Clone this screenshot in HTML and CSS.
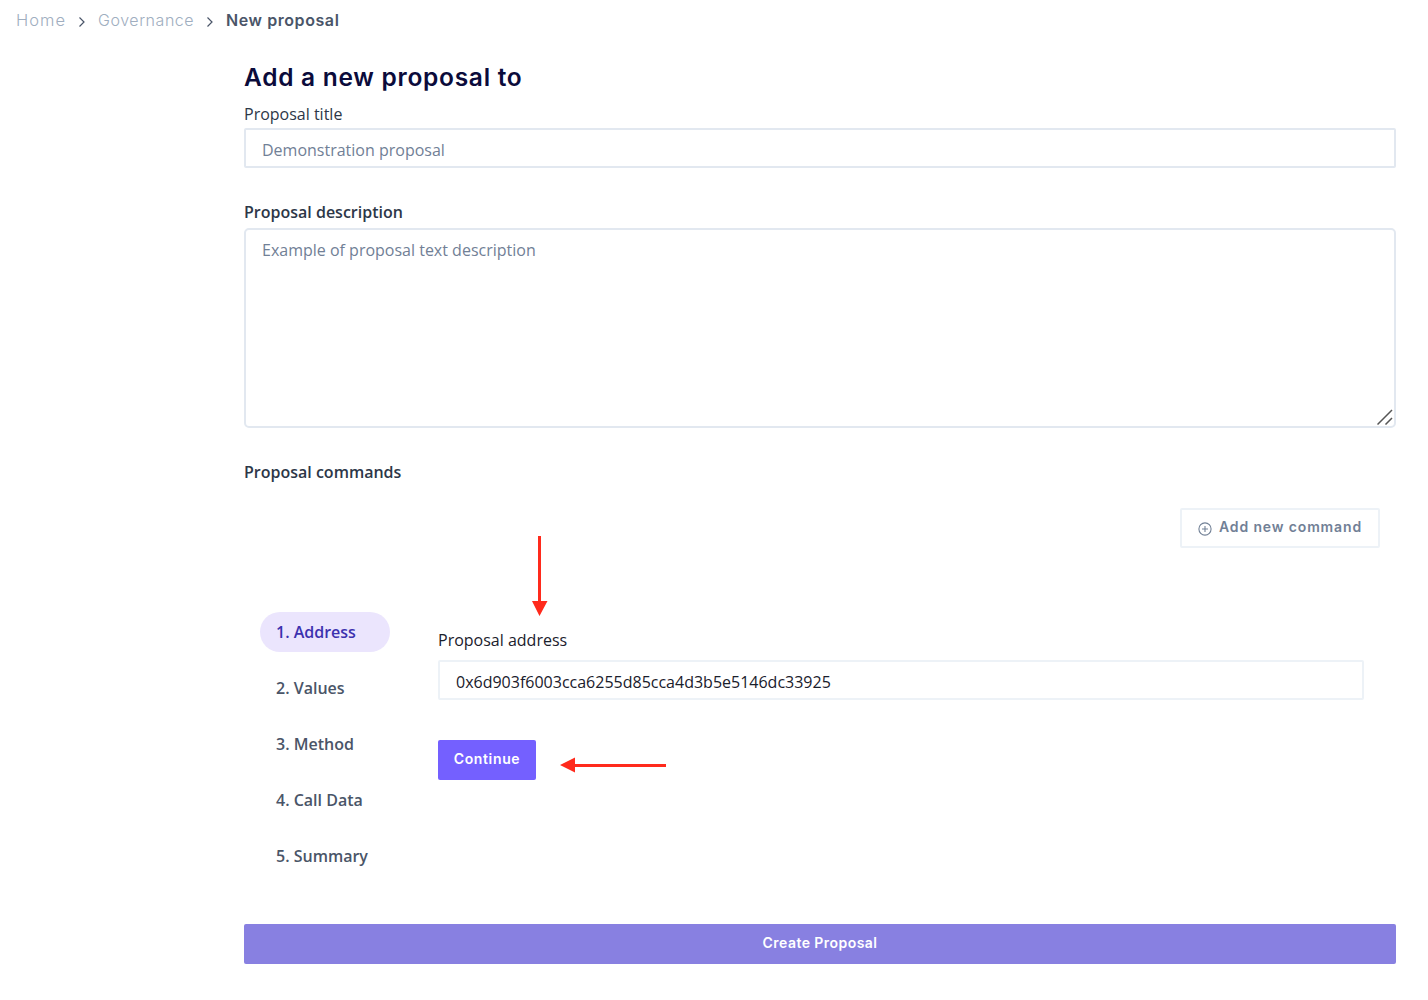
FILE: index.html
```html
<!DOCTYPE html>
<html lang="en">
<head>
<meta charset="utf-8">
<title>New proposal</title>
<link rel="stylesheet" href="styles.css">
</head>
<body>
<nav class="breadcrumb">
  <a class="crumb home">Home</a>
  <svg class="chevron" viewBox="0 0 8 12"><path d="M1.500 1.500L6 6l-4.500 4.500"/></svg>
  <a class="crumb governance">Governance</a>
  <svg class="chevron" viewBox="0 0 8 12"><path d="M1.500 1.500L6 6l-4.500 4.500"/></svg>
  <span class="current">New proposal</span>
</nav>
<main class="form">
  <h1 class="heading"><span>Add a new proposal to</span></h1>
  <label class="label plain" for="title"><span>Proposal title</span></label>
  <input class="field" id="title" placeholder="Demonstration proposal">
  <label class="label description-label" for="description"><span>Proposal description</span></label>
  <div class="area-wrap">
    <textarea class="area" id="description" placeholder="Example of proposal text description"></textarea>
    <svg class="grip" viewBox="0 0 16 16"><path d="M.5 15.500L15 1M8.500 15.500L15 9"/></svg>
  </div>
  <div class="label commands-label"><span>Proposal commands</span></div>
  <div class="toolbar">
    <button class="add">
      <svg class="plus" viewBox="0 0 14 14"><circle cx="7" cy="7" r="6.1"/><path d="M7 4v6M4 7h6"/></svg>
      <span class="add-text">Add new command</span>
    </button>
  </div>
  <section class="command">
    <ol class="steps">
      <li class="step active">1. Address</li>
      <li class="step">2. Values</li>
      <li class="step">3. Method</li>
      <li class="step">4. Call Data</li>
      <li class="step">5. Summary</li>
    </ol>
    <div class="panel">
      <label class="label address-label" for="address"><span>Proposal address</span></label>
      <input class="field light" id="address" value="0x6d903f6003cca6255d85cca4d3b5e5146dc33925">
      <button class="continue"><span>Continue</span></button>
      <svg class="arrow down" viewBox="0 0 16 80"><path d="M6 0h3v65h6.500L7.500 80 0 65h6z"/></svg>
      <svg class="arrow left" viewBox="0 0 106 16"><path d="M106 7v3H15V15.500L0 8 15 .5V7z"/></svg>
    </div>
  </section>
  <button class="create"><span>Create Proposal</span></button>
</main>
</body>
</html>
```
FILE: styles.css
```css
* { box-sizing: border-box; }
body { margin: 0; background: #fff; color: #2d3748; font: 16px/24px "Open Sans", sans-serif; }
input, textarea, button { margin: 0; font: inherit; }
.breadcrumb { display: flex; align-items: center; height: 40px; padding-left: 16px; font-family: Inter, sans-serif; }
.crumb { color: #a0aec0; font-weight: 300; white-space: nowrap; }
.home { width: 50px; font-size: 16.5px; letter-spacing: 1px; }
.governance { width: 96px; letter-spacing: .55px; }
.chevron { width: 8px; height: 12px; margin: 3px 12px 0; fill: none; stroke: #4a5568; stroke-width: 1.2; }
.current { color: #4a5568; font-weight: 600; letter-spacing: .58px; }
.form { display: flex; flex-direction: column; width: 1152px; margin-left: 244px; }
.heading { margin: 19px 0 1px; height: 36px; color: #0b0b3b; font: 600 24.5px/36px Inter, sans-serif; letter-spacing: .72px; }
.label { display: block; height: 24px; font-weight: 600; }
.plain { margin-top: 6px; font-weight: 400; }
.field { width: 100%; height: 40px; margin-top: 2px; padding: 4px 16px 0; background: #fff; border: 2px solid #e2e8f0; border-radius: 2px; color: #1a202c; outline: 0; }
.field::placeholder, .area::placeholder { color: #718096; opacity: 1; }
.description-label { margin-top: 32px; }
.area-wrap { position: relative; height: 200px; margin-top: 4px; }
.area { display: block; width: 100%; height: 200px; padding: 8px 16px; border: 2px solid #e2e8f0; border-radius: 5px; resize: none; outline: 0; }
.grip { position: absolute; right: 3px; bottom: 3px; width: 16px; height: 16px; fill: none; stroke: #555; stroke-width: 1.5; }
.commands-label { margin-top: 32px; }
.toolbar { display: flex; justify-content: flex-end; margin-top: 24px; padding-right: 16px; }
.add { display: flex; align-items: center; width: 200px; height: 40px; padding: 0 16px 2px; background: #fff; border: 2px solid #edf2f7; border-radius: 2px; color: #718096; font: 600 14px/20px Inter, sans-serif; }
.plus { width: 14px; height: 14px; margin: 4px 7px 0 0; fill: none; stroke: #718096; stroke-width: 1.1; }
.add-text { letter-spacing: .86px; white-space: nowrap; }
.command { display: flex; height: 264px; margin: 64px 32px 0 16px; }
.steps { display: flex; flex-direction: column; gap: 16px; width: 130px; margin: 0; padding: 0; list-style: none; }
.step { height: 40px; padding: 8px 16px; border-radius: 20px; color: #4a5568; font-weight: 600; }
.active { background: #ebe5fd; color: #3c31af; }
.panel { position: relative; flex: 1; margin-left: 48px; padding-top: 16px; }
.address-label { color: #1a202c; font-weight: 400; }
.light { display: block; margin-top: 8px; border-color: #edf2f7; }
.continue { display: block; width: 98px; height: 40px; margin-top: 40px; padding: 0 0 2px; background: #7460ff; border: 0; border-radius: 2px; color: #fff; font: 600 14px/20px Inter, sans-serif; letter-spacing: .65px; }
.arrow { position: absolute; fill: #ff2a1c; }
.down { left: 94px; top: -76px; width: 16px; height: 80px; }
.left { left: 122px; top: 145px; width: 106px; height: 16px; }
.create { height: 40px; margin-top: 48px; padding: 0 0 2px; background: #8880e1; border: 0; border-radius: 2px; color: #fff; font: 600 14px/20px Inter, sans-serif; letter-spacing: .45px; }
```
